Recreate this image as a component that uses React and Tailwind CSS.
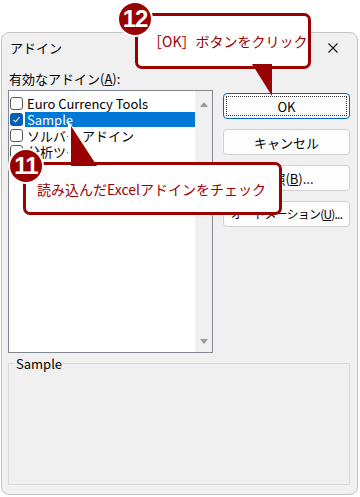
import React from 'react';

const RED = '#990000';

function Check({ checked }) {
  if (checked) {
    return (
      <span className="w-[13px] h-[13px] shrink-0 rounded-[3px] bg-[#005fb8] flex items-center justify-center">
        <svg width="9" height="9" viewBox="0 0 9 9">
          <path d="M1.5 4.8 L3.6 6.8 L7.6 2" fill="none" stroke="#fff" strokeWidth="1.1" />
        </svg>
      </span>
    );
  }
  return <span className="w-[13px] h-[13px] shrink-0 rounded-[3px] border border-[#5a5a5a] bg-white" />;
}

function Row({ label, checked, selected }) {
  return (
    <div className="h-[16px] flex items-center pl-[1px]">
      <Check checked={checked} />
      <div
        className={
          selected
            ? 'ml-[2px] flex-1 h-[15px] flex items-center px-[2px] bg-[#0078d7] text-white whitespace-nowrap'
            : 'ml-[2px] flex-1 h-[15px] flex items-center px-[2px] text-black whitespace-nowrap'
        }
      >
        {label}
      </div>
    </div>
  );
}

function Btn({ children, primary, tight }) {
  if (primary) {
    return (
      <div className="h-[26px] rounded-[4px] border-[1.5px] border-[#0067c0] bg-[#fdfdfd] p-[2px]">
        <div className="h-full border border-dotted border-[#333] flex items-center justify-center">
          <span className="whitespace-nowrap">{children}</span>
        </div>
      </div>
    );
  }
  return (
    <div className="h-[26px] rounded-[4px] border border-[#d0d0d0] bg-[#fdfdfd] flex items-center justify-center">
      <span className={tight ? 'whitespace-nowrap text-[12px] tracking-[-0.8px]' : 'whitespace-nowrap'}>{children}</span>
    </div>
  );
}

export default function App() {
  return (
    <div className="relative w-[360px] h-[497px] bg-white overflow-hidden font-['Noto_Sans_CJK_JP',sans-serif] text-[13px] text-black leading-none">
      <div className="ml-[1px] mt-[32px] w-[357px] h-[463px] rounded-[8px] border border-[#c4c4c4] bg-[#f0f0f0] flex flex-col">
        <div className="h-[29px] flex items-center justify-between pl-[8px] pr-[19px]">
          <span>アドイン</span>
          <svg width="10" height="10" viewBox="0 0 10 10">
            <path d="M0.5 0.5 L9.5 9.5 M9.5 0.5 L0.5 9.5" stroke="#111" strokeWidth="1.1" />
          </svg>
        </div>

        <div className="mt-[6px] h-[20px] flex items-center pl-[7px]">
          <span className="whitespace-nowrap">
            有効なアドイン(<span className="underline">A</span>):
          </span>
        </div>

        <div className="mt-[2px] flex pl-[6px]">
          <div className="w-[205px] h-[263px] border border-[#828790] bg-white flex">
            <div className="flex-1 pt-[4px]">
              <Row label="Euro Currency Tools" />
              <Row label="Sample" checked selected />
              <Row label="ソルバー アドイン" />
              <Row label="分析ツール" />
              <Row label="分析ツール - VBA" />
            </div>
            <div className="w-[17px] bg-[#f0f0f0] flex flex-col justify-between items-center pt-[11px] pb-[8px]">
              <svg width="8" height="5" viewBox="0 0 8 5">
                <path d="M0 5 L4 0 L8 5 Z" fill="#9a9a9a" />
              </svg>
              <svg width="8" height="5" viewBox="0 0 8 5">
                <path d="M0 0 L8 0 L4 5 Z" fill="#9a9a9a" />
              </svg>
            </div>
          </div>

          <div className="ml-[10px] mt-[3px] w-[127px] flex flex-col gap-[10px]">
            <Btn primary>OK</Btn>
            <Btn>キャンセル</Btn>
            <Btn>
              参照(<span className="underline">B</span>)...
            </Btn>
            <Btn tight>
              オートメーション(<span className="underline">U</span>)...
            </Btn>
          </div>
        </div>

        <fieldset className="mt-[4px] ml-[6px] w-[342px] h-[128px] border border-[#d9d9d9] px-[6px]">
          <legend className="px-[1px]">Sample</legend>
        </fieldset>
      </div>

      {/* callout 12 */}
      <div className="absolute left-[135px] top-[13px] w-[176px] h-[56px] border-[3px] border-[#990000] rounded-[7px] bg-white flex items-center pl-[10px] text-[14px] text-[#a00000] whitespace-nowrap">
        ［OK］ボタンをクリック
      </div>
      <svg className="absolute left-[250px] top-[64px]" width="24" height="34" viewBox="0 0 24 34">
        <polygon points="2,0 22,0 22,32" fill={RED} />
      </svg>
      <div className="absolute left-[117px] top-[1px] w-[36px] h-[36px] rounded-full bg-[#990000] border-2 border-white flex items-center justify-center text-white text-[24px] font-bold font-['Liberation_Sans',sans-serif] tracking-[-1px]">
        12
      </div>

      {/* callout 11 */}
      <svg className="absolute left-[66px] top-[121px]" width="40" height="46" viewBox="0 0 40 46">
        <polygon points="2,0 2,45 38,45" fill="#fff" />
      </svg>
      <div className="absolute left-[23px] top-[162px] w-[259px] h-[53px] border-[3px] border-[#990000] rounded-[7px] bg-white flex items-center pl-[11px] text-[14px] text-[#a00000] whitespace-nowrap">
        読み込んだExcelアドインをチェック
      </div>
      <svg className="absolute left-[66px] top-[121px]" width="40" height="46" viewBox="0 0 40 46">
        <polygon points="5,5 5,45 31,45" fill={RED} />
      </svg>
      <div className="absolute left-[8px] top-[148px] w-[36px] h-[36px] rounded-full bg-[#990000] border-2 border-white flex items-center justify-center text-white text-[24px] font-bold font-['Liberation_Sans',sans-serif] tracking-[-1px]">
        11
      </div>
    </div>
  );
}
